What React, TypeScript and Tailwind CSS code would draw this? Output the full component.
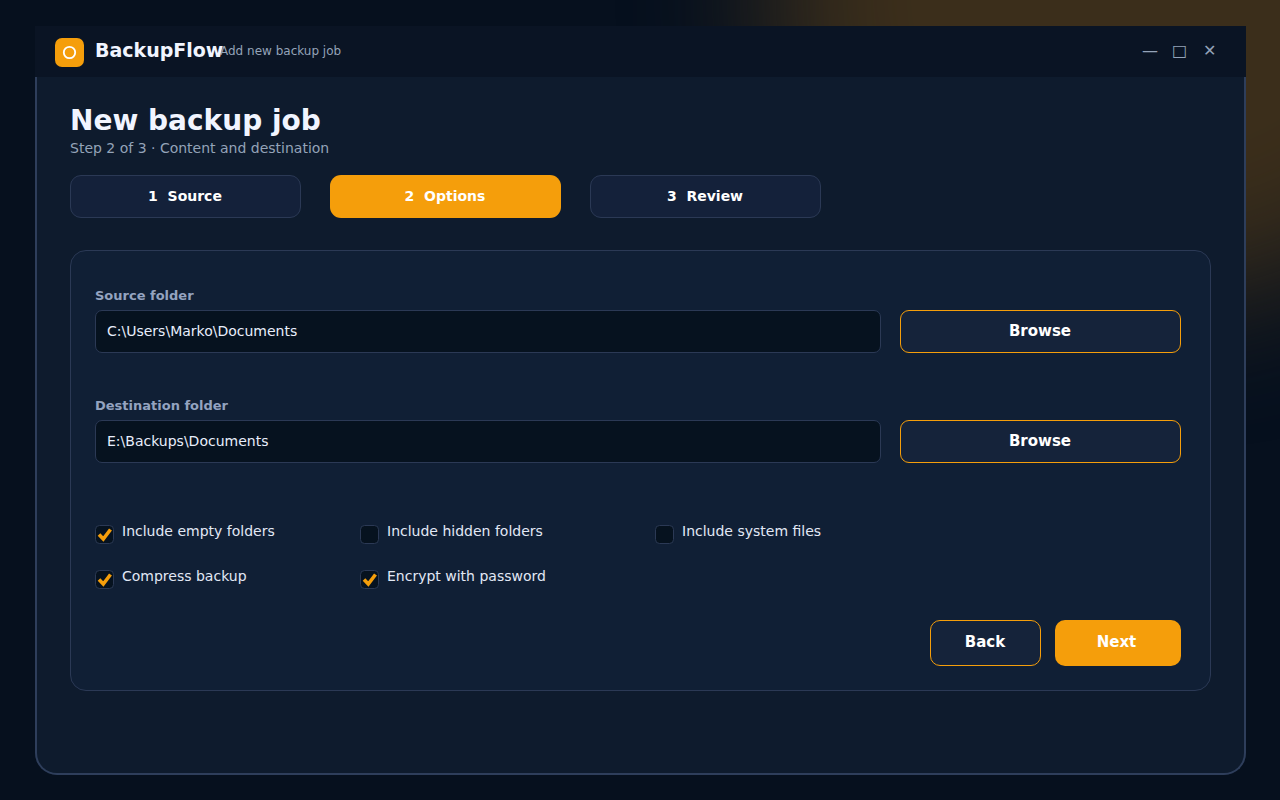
import React from "react";

function Step({ label, active }: { label: string; active?: boolean }) {
  return (
    <div
      className={
        active
          ? "flex h-[43px] w-[231px] items-center justify-center rounded-[11px] bg-[#f59e0b] pr-px text-[14px] font-bold whitespace-pre text-white"
          : "flex h-[43px] w-[231px] items-center justify-center rounded-[11px] border border-[#2b3955] bg-[#14213a] pr-px text-[14px] font-bold whitespace-pre text-white"
      }
    >
      {label}
    </div>
  );
}

function FolderField({ label, value }: { label: string; value: string }) {
  return (
    <div className="h-[110px]">
      <div className="h-[22px] text-[13px] leading-[16px] font-bold text-[#94a3c0]">{label}</div>
      <div className="flex gap-[19px]">
        <div className="flex h-[43px] w-[786px] items-center rounded-[7px] border border-[#2b3955] bg-[#06121f] pl-[11px] text-[14px] text-[#e8eefc]">
          {value}
        </div>
        <button className="h-[43px] w-[281px] rounded-[9px] border border-[#f59e0b] bg-[#15233a] pr-px text-[15px] font-bold text-white">
          Browse
        </button>
      </div>
    </div>
  );
}

function Check({ label, checked }: { label: string; checked?: boolean }) {
  return (
    <label className="flex h-[19px] items-start gap-[8px]">
      <svg width="19" height="19" viewBox="0 0 19 19" fill="none">
        <rect x="0.5" y="0.5" width="18" height="18" rx="4" fill="#06121f" stroke="#2b3955" />
        {checked && <path d="M4 9.5L8.3 14L15.5 4.5" stroke="#f59e0b" strokeWidth="3.6" />}
      </svg>
      <span className="-mt-px text-[14px] leading-[14px] whitespace-nowrap text-[#e2e8f5]">{label}</span>
    </label>
  );
}

export default function App() {
  return (
    <div className="relative isolate h-[800px] w-[1280px] overflow-hidden bg-[#06101e] pt-[26px] pl-[35px] font-['DejaVu_Sans',sans-serif]">
      <div className="absolute top-[-300px] left-[767px] -z-10 h-[600px] w-[740px] rounded-[50%] bg-[#3b2e1b] blur-[65px]" />
      <div className="flex h-[749px] w-[1211px] flex-col rounded-b-[22px] bg-[#0e1b2d]">
        <header className="flex h-[51px] shrink-0 items-center bg-[#0a1424] pl-[20px]">
          <svg className="mt-[2px]" width="29" height="29" viewBox="0 0 29 29" fill="none">
            <rect width="29" height="29" rx="7" fill="#f59e0b" />
            <circle cx="14.5" cy="14.5" r="5.7" stroke="white" strokeWidth="1.8" />
          </svg>
          <div className="mb-[3px] ml-[11px] w-[125px] text-[19px] leading-[22px] font-bold whitespace-nowrap text-[#f1f5ff]">BackupFlow</div>
          <div className="mb-[2px] text-[12px] leading-[14px] text-[#94a3b8]">Add new backup job</div>
          <div className="mr-[28px] mb-[2px] ml-auto flex items-center text-[16px] leading-[20px] text-[#94a3b8]">
            <span className="w-[30px]">—</span>
            <span className="w-[30px]">□</span>
            <span className="w-[16px] pl-px">✕</span>
          </div>
        </header>
        <main className="flex-1 rounded-b-[22px] border-2 border-t-0 border-[#2e3e5b] px-[33px] pt-[27px]">
          <h1 className="text-[28px] leading-[34px] font-bold text-[#f1f5ff]">New backup job</h1>
          <p className="mt-[2px] text-[14px] leading-[16px] text-[#94a3b8]">Step 2 of 3 · Content and destination</p>
          <div className="mt-[19px] flex gap-[29px]">
            <Step label="1  Source" />
            <Step label="2  Options" active />
            <Step label="3  Review" />
          </div>
          <section className="mt-[32px] h-[441px] w-[1141px] rounded-[16px] border border-[#2b3955] bg-[#101f35] pt-[37px] pl-[24px]">
            <FolderField label="Source folder" value="C:\Users\Marko\Documents" />
            <FolderField label="Destination folder" value="E:\Backups\Documents" />
            <div className="mt-[17px] grid grid-cols-[265px_295px_265px] gap-y-[26px]">
              <Check label="Include empty folders" checked />
              <Check label="Include hidden folders" />
              <Check label="Include system files" />
              <Check label="Compress backup" checked />
              <Check label="Encrypt with password" checked />
            </div>
            <div className="mt-[31px] mr-[29px] flex justify-end gap-[14px] text-[15px] font-bold text-white">
              <button className="h-[46px] w-[111px] rounded-[10px] border border-[#f59e0b] bg-[#15233a] pr-px pb-[2px]">Back</button>
              <button className="h-[46px] w-[126px] rounded-[10px] bg-[#f59e0b] pr-[3px] pb-[2px]">Next</button>
            </div>
          </section>
        </main>
      </div>
    </div>
  );
}
